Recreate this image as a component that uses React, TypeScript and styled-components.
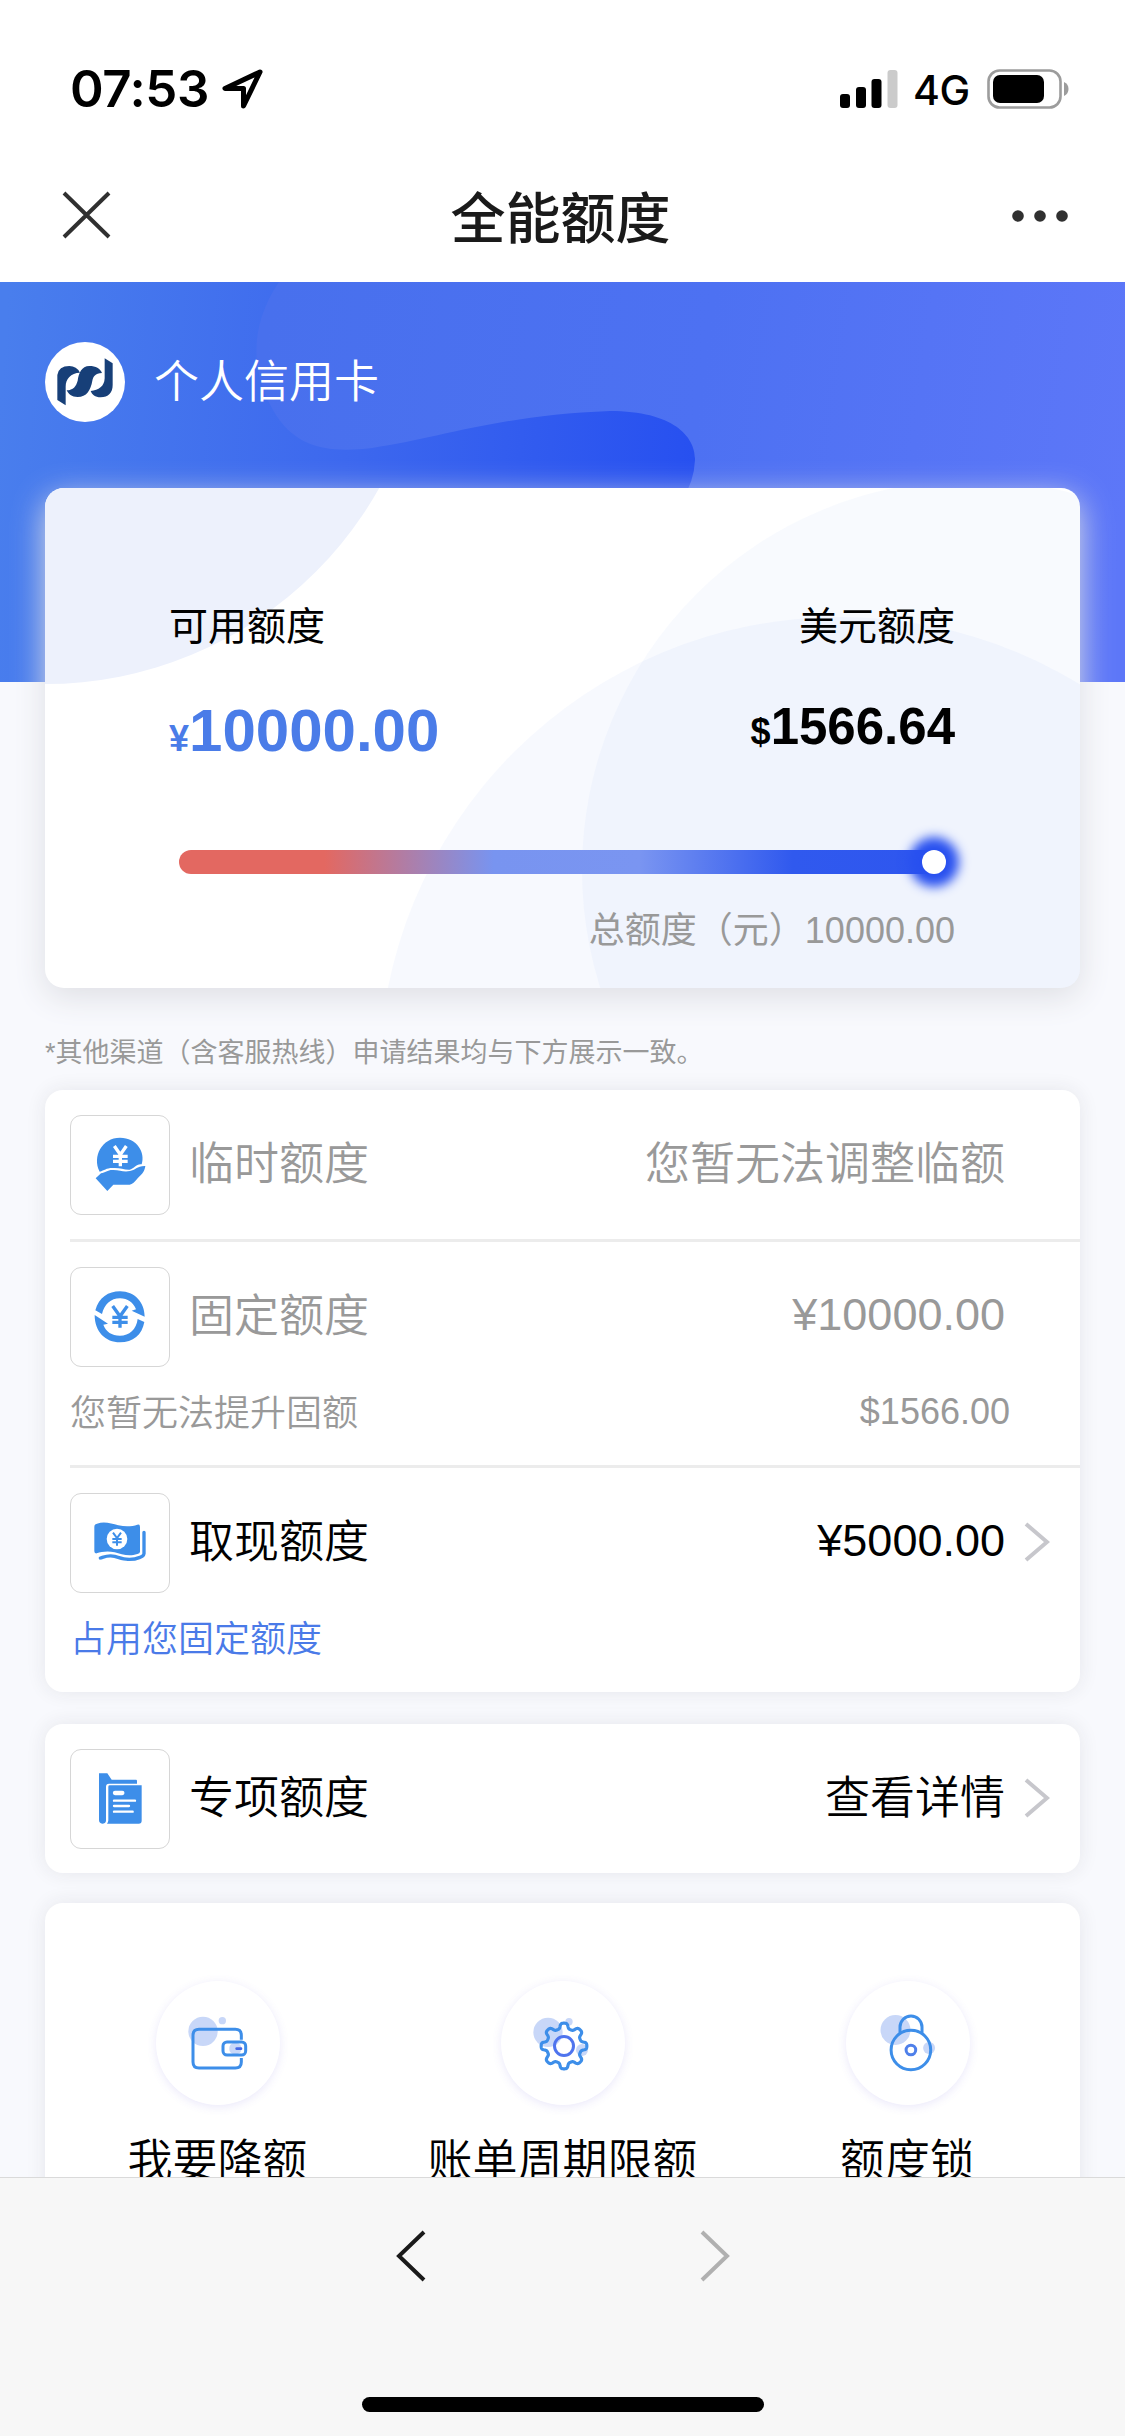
import React from "react";
import styled, { createGlobalStyle } from "styled-components";

const Global = createGlobalStyle`
  * { box-sizing: border-box; }
  html, body { margin: 0; padding: 0; background: #f8f9fd; }
  body { font-family: "Liberation Sans", "Noto Sans CJK SC", sans-serif; color: #000; }
  svg { display: block; flex: none; }
`;

const Screen = styled.div`
  width: 1125px;
  height: 2436px;
  overflow: hidden;
  display: flex;
  flex-direction: column;
`;

const StatusBar = styled.div`
  flex: none;
  height: 150px;
  padding: 58px 56px 0 70px;
  background: #fff;
  display: flex;
  justify-content: space-between;
  font-family: Inter, "Liberation Sans", sans-serif;
`;

const StatusGroup = styled.div<{ $gap: number }>`
  display: flex;
  align-items: center;
  height: 62px;
  gap: ${(p) => p.$gap}px;
`;

const Clock = styled.span`
  width: 139px;
  font-size: 51px;
  line-height: 62px;
  font-weight: 600;
  letter-spacing: -0.4px;
  white-space: nowrap;
`;

const Network = styled.span`
  width: 59px;
  font-size: 41px;
  line-height: 62px;
  font-weight: 500;
  letter-spacing: -0.5px;
  padding-top: 2px;
`;

const NavBar = styled.div`
  flex: none;
  height: 132px;
  padding: 0 57px 0 62px;
  background: #fff;
  display: grid;
  grid-template-columns: 50px 1fr 50px;
  align-items: center;
`;

const NavTitle = styled.h1`
  margin: 0;
  padding: 0 9px 5px 0;
  text-align: center;
  font-size: 55px;
  line-height: 64px;
  font-weight: 500;
  color: #1a1a1a;
  font-family: "Noto Sans CJK SC", sans-serif;
`;

const NavIcon = styled.div<{ $end?: boolean }>`
  display: flex;
  justify-content: ${(p) => (p.$end ? "flex-end" : "flex-start")};
  padding-bottom: ${(p) => (p.$end ? 0 : 2)}px;
`;

const Content = styled.main`
  flex: none;
  height: 1895px;
  overflow: hidden;
`;

const Hero = styled.section`
  position: relative;
  height: 400px;
  padding: 60px 45px 0;
`;

const HeroArt = styled.svg`
  position: absolute;
  inset: 0;
`;

const Brand = styled.div`
  position: relative;
  display: flex;
  align-items: center;
  gap: 29px;
  height: 80px;
  color: #fff;
`;

const BrandName = styled.span`
  padding-top: 2px;
  font-size: 45px;
  line-height: 60px;
  font-weight: 350;
`;

const Logo = styled.div`
  width: 80px;
  height: 80px;
  border-radius: 50%;
  background: #fff;
`;

const LimitCard = styled.section`
  position: relative;
  margin: -194px 45px 0;
  height: 500px;
  padding: 113px 125px 0 124px;
  border-radius: 19px;
  background: #fff;
  box-shadow: 0 9px 32px rgb(222, 223, 228);
`;

const CardArt = styled.svg`
  position: absolute;
  inset: 0;
  border-radius: 19px;
`;

const Limits = styled.div`
  position: relative;
  display: flex;
  justify-content: space-between;
`;

const Limit = styled.div<{ $right?: boolean }>`
  display: flex;
  flex-direction: column;
  align-items: ${(p) => (p.$right ? "flex-end" : "flex-start")};
`;

const LimitLabel = styled.span`
  font-size: 39px;
  line-height: 52px;
`;

const Amount = styled.span<{ $size: number; $color: string }>`
  margin-top: 42px;
  font-weight: 700;
  font-size: ${(p) => p.$size}px;
  line-height: ${(p) => (p.$size > 55 ? 72 : 64)}px;
  color: ${(p) => p.$color};
  white-space: nowrap;
`;

const Currency = styled.small`
  font-size: 36px;
`;

const Slider = styled.div`
  position: relative;
  margin: 75px 9px 0 10px;
  height: 24px;
  border-radius: 12px;
  display: flex;
  justify-content: flex-end;
  background: linear-gradient(90deg, #e36861 19%, #7894f0 41%, #7a95f1 60%, #3059ee 80%, #2e56ef);
`;

const Knob = styled.i`
  width: 24px;
  height: 24px;
  border-radius: 50%;
  background: #fff;
  box-shadow: 0 0 11px 13px #2850ef;
`;

const Total = styled.div`
  position: relative;
  margin-top: 33px;
  text-align: right;
  font-size: 36px;
  line-height: 48px;
  color: #999;
`;

const Note = styled.p`
  margin: 0;
  padding: 45px 45px 0;
  height: 102px;
  font-size: 27px;
  line-height: 40px;
  color: #999;
`;

const Panel = styled.section<{ $height: number; $gap?: number }>`
  margin: 0 45px ${(p) => p.$gap ?? 0}px;
  height: ${(p) => p.$height}px;
  border-radius: 18px;
  background: #fff;
  box-shadow: 0 0 20px rgba(40, 40, 60, 0.09);
`;

const Item = styled.div<{ $height: number; $line?: boolean }>`
  margin-left: 25px;
  height: ${(p) => p.$height}px;
  padding-top: 25px;
  border-bottom: ${(p) => (p.$line ? "3px solid #ececec" : "none")};
`;

const ItemRow = styled.div<{ $muted?: boolean }>`
  display: flex;
  align-items: center;
  height: 100px;
  padding-right: 28px;
  font-size: 45px;
  line-height: 60px;
  font-weight: 350;
  color: ${(p) => (p.$muted ? "#999" : "#000")};
`;

const IconBox = styled.div`
  width: 100px;
  height: 100px;
  margin-right: 19px;
  border: 1px solid #d6d6d6;
  border-radius: 11px;
`;

const Value = styled.span<{ $numeric?: boolean }>`
  margin-left: auto;
  padding-bottom: ${(p) => (p.$numeric ? 4 : 0)}px;
`;

const ArrowSlot = styled.span`
  width: 47px;
  display: flex;
  justify-content: flex-end;
  padding: 0 2px 2px 0;
`;

const ItemNote = styled.div<{ $link?: boolean }>`
  display: flex;
  justify-content: space-between;
  padding-right: 70px;
  margin-top: 23px;
  font-size: 36px;
  line-height: 48px;
  font-weight: 350;
  color: ${(p) => (p.$link ? "#4a7ae8" : "#999")};
`;

const NoteValue = styled.span`
  margin-top: -2px;
`;

const Actions = styled.div`
  display: grid;
  grid-template-columns: repeat(3, 1fr);
  padding-top: 78px;
`;

const Action = styled.div`
  display: flex;
  flex-direction: column;
  align-items: center;
  gap: 27px;
  font-size: 45px;
  line-height: 60px;
  font-weight: 350;
  white-space: nowrap;
`;

const RoundIcon = styled.div`
  width: 124px;
  height: 124px;
  border-radius: 50%;
  background: #fff;
  box-shadow: 0 2px 10px rgba(90, 80, 220, 0.13);
`;

const BottomBar = styled.footer`
  flex: none;
  height: 259px;
  padding-top: 52px;
  border-top: 1px solid #dadada;
  background: #f7f7f7;
  display: flex;
  flex-direction: column;
  align-items: center;
`;

const Pager = styled.div`
  display: flex;
  gap: 274px;
  height: 52px;
`;

const HomeIndicator = styled.div`
  margin-top: 115px;
  width: 402px;
  height: 15px;
  border-radius: 8px;
  background: #000;
`;

const BLUE = "#3d8ee9";

const Chevron = ({ back, color, w, h, sw }: { back?: boolean; color: string; w: number; h: number; sw: number }) => (
  <svg width={w} height={h} fill="none" stroke={color} strokeWidth={sw}>
    <path d={back ? `M${w - 2} 2L3 ${h / 2}L${w - 2} ${h - 2}` : `M2 2L${w - 3} ${h / 2}L2 ${h - 2}`} />
  </svg>
);

const HandCoinIcon = () => (
  <svg width="98" height="98" viewBox="33 48 294 294" fill={BLUE}>
    <path d="M119 215C96 169 126 113 180 113C231 113 257 158 245 193C230 190 221 207 209 209C192 210 181 203 161 204C139 203 134 211 119 215Z" />
    <path d="M107 235L123 220C137 218 142 209 160 210C181 210 190 217 210 213C225 211 232 197 256 198C254 216 243 225 233 235C224 246 217 254 209 254H160L142 273Z" />
    <path d="M163 138L181 164L199 138M181 164V199M159 169H203M159 184H203" fill="none" stroke="#fff" strokeWidth="10" />
  </svg>
);

const CycleIcon = () => (
  <svg width="98" height="98" viewBox="33 503 294 294" fill={BLUE}>
    <path d="M106 630C117 591 145 573 180 573C225 573 254 607 254 649L215 631L228 627C220 607 203 594 180 594C152 594 133 612 126 641Z" />
    <path d="M104 644L144 670L130 673C138 694 155 706 180 706C208 706 229 688 233 656L253 665C246 704 219 726 180 726C136 726 104 694 104 644Z" />
    <path d="M158 617L180 648L202 617M180 646V682M157 651H203M157 666H203" fill="none" stroke={BLUE} strokeWidth="10" />
  </svg>
);

const CashIcon = () => (
  <svg width="98" height="98" viewBox="33 42 294 294" fill={BLUE}>
    <path d="M103 140Q103 132 111 131C132 123 154 130 175 136C198 141 218 139 232 134Q240 132 240 141V215Q240 221 232 222C206 231 184 222 164 217C143 212 125 215 110 220Q103 221 103 214Z" />
    <path d="M252 157V221Q251 229 240 232C210 244 185 236 164 229C145 224 134 230 121 234" fill="none" stroke={BLUE} strokeWidth="10" strokeLinecap="round" />
    <circle cx="171" cy="177" r="31" fill="#fff" />
    <path d="M159 158L171 174L183 158M171 173V197M157 177H185M157 187H185" fill="none" stroke={BLUE} strokeWidth="6" />
  </svg>
);

const FolderIcon = () => (
  <svg width="98" height="98" viewBox="33 810 294 294" fill={BLUE}>
    <path d="M117 880H142L155 899H228Q231 899 231 903V911H147Q138 911 138 920V1023Q136 1031 127 1031Q117 1030 117 1020Z" />
    <path d="M149 916H245V1022Q245 1031 236 1031H141Q145 1027 145 1021V920Q145 916 149 916Z" />
    <path d="M165 939H187" stroke="#fff" strokeWidth="13" strokeLinecap="round" />
    <path d="M162 962H225M162 978H207M162 995H218" stroke="#fff" strokeWidth="7" strokeLinecap="round" />
  </svg>
);

const WalletIcon = () => (
  <svg width="124" height="124" viewBox="18 18 372 372" fill="none">
    <circle cx="159" cy="169" r="44" fill="#c8d7f8" />
    <circle cx="217" cy="137" r="11" fill="#c8d7f8" />
    <path d="M274 194V181Q274 163 256 163H147Q129 163 129 181V261Q129 279 147 279H256Q274 279 274 261V249" stroke={BLUE} strokeWidth="9" />
    <rect x="238" y="204" width="36" height="34" rx="15" fill="#c8d7f8" />
    <rect x="219" y="201" width="68" height="39" rx="12" stroke={BLUE} strokeWidth="9" />
    <path d="M260 221H273" stroke="#4467e6" strokeWidth="8" strokeLinecap="round" />
  </svg>
);

// Eight rounded teeth, sampled around the hub.
const gearPath =
  Array.from({ length: 240 }, (_, i) => {
    const t = (i / 240) * Math.PI * 2;
    const r = 60.5 + (8 * Math.tanh(2 * Math.cos(8 * t))) / Math.tanh(2);
    return `${i ? "L" : "M"}${(207 + r * Math.sin(t)).toFixed(2)} ${(213 - r * Math.cos(t)).toFixed(2)}`;
  }).join("") + "Z";

const GearIcon = () => (
  <svg width="124" height="124" viewBox="18 18 372 372" fill="none">
    <circle cx="159" cy="172" r="44" fill="#c8d7f8" />
    <circle cx="222" cy="140" r="11" fill="#c8d7f8" />
    <circle cx="261" cy="225" r="18" fill="#c8d7f8" />
    <path d={gearPath} stroke={BLUE} strokeWidth="9.5" strokeLinejoin="round" />
    <circle cx="207" cy="213" r="28.5" stroke="#4f74ee" strokeWidth="9" />
  </svg>
);

const LockIcon = () => (
  <svg width="124" height="124" viewBox="845.5 1981 124 124" fill="none">
    <circle cx="895" cy="2030" r="15" fill="#c8d7f8" />
    <circle cx="928.6" cy="2048" r="6" fill="#c8d7f8" />
    <path d="M899.5 2033V2027A11 11 0 0 1 921.5 2027V2033" stroke={BLUE} strokeWidth="3" />
    <circle cx="910.4" cy="2050" r="19.8" stroke={BLUE} strokeWidth="3" />
    <circle cx="910.4" cy="2050" r="4.8" stroke="#4f80ea" strokeWidth="3" />
  </svg>
);

export default function App() {
  return (
    <Screen>
      <Global />
      <StatusBar>
        <StatusGroup $gap={13}>
          <Clock>07:53</Clock>
          <svg width="42" height="42" viewBox="0 0 42 42" fill="none" stroke="#000" strokeWidth="5" strokeLinejoin="round">
            <path d="M38 4L3 20.5H21.5V38Z" />
          </svg>
        </StatusGroup>
        <StatusGroup $gap={15}>
          <svg width="59" height="38" viewBox="0 0 59 38">
            <rect x="1" y="24" width="10" height="14" rx="3" />
            <rect x="17" y="17" width="10" height="21" rx="3" />
            <rect x="32.5" y="9" width="10" height="29" rx="3" />
            <rect x="48.5" y="0" width="10" height="38" rx="3" fill="#cbcbcb" />
          </svg>
          <Network>4G</Network>
          <svg width="82" height="40" viewBox="0 0 82 40">
            <rect x="1.5" y="1.5" width="72" height="37" rx="11" fill="none" stroke="#9c9c9c" strokeWidth="2.6" />
            <rect x="6" y="6" width="51" height="28" rx="7" />
            <path d="M77 13Q81.5 15 81.5 20T77 27Z" fill="#9c9c9c" />
          </svg>
        </StatusGroup>
      </StatusBar>
      <NavBar>
        <NavIcon>
          <svg width="50" height="48" viewBox="0 0 50 48" stroke="#303030" strokeWidth="4">
            <path d="M2 2L47 46M47 2L2 46" />
          </svg>
        </NavIcon>
        <NavTitle>全能额度</NavTitle>
        <NavIcon $end>
          <svg width="56" height="12" fill="#303030">
            <circle cx="6" cy="6" r="5.8" />
            <circle cx="28" cy="6" r="5.8" />
            <circle cx="50" cy="6" r="5.8" />
          </svg>
        </NavIcon>
      </NavBar>

      <Content>
        <Hero>
          <HeroArt width="1125" height="400" viewBox="0 282 1125 400">
            <defs>
              <linearGradient id="deep" gradientUnits="userSpaceOnUse" x1="0" y1="400" x2="695" y2="450">
                <stop offset="0" stopColor="#497eed" />
                <stop offset="0.5" stopColor="#3d68ee" />
                <stop offset="1" stopColor="#2750f0" />
              </linearGradient>
              <linearGradient id="soft" gradientUnits="userSpaceOnUse" x1="256" y1="400" x2="1125" y2="520">
                <stop offset="0" stopColor="#4870ed" />
                <stop offset="0.5" stopColor="#4d71f2" />
                <stop offset="1" stopColor="#5d77f8" />
              </linearGradient>
            </defs>
            <rect y="282" width="1125" height="400" fill="url(#deep)" />
            <path d="M279 282C250 325 250 369 273 410C295 449 330 453 372 448C440 438 500 415 610 411C675 411 696 438 695 460Q694 482 682 500V682H1125V282Z" fill="url(#soft)" />
          </HeroArt>
          <Brand>
            <Logo>
              <svg width="80" height="80" viewBox="45 66 240 240" fill="#173f78">
                <path d="M82 165Q86 138 118 138Q140 138 150 158C122 159 107 176 107 200V256L82 240Z" />
                <path d="M178 138C198 138 210 145 216 159C195 160 190 170 187 182C182 210 170 231 143 231C125 231 115 222 110 211C130 210 138 200 143 182C146 160 155 138 178 138Z" />
                <path d="M224 115L248 130V195C248 218 235 232 212 232C195 232 186 224 182 213C206 210 223 200 224 175Z" />
              </svg>
            </Logo>
            <BrandName>个人信用卡</BrandName>
          </Brand>
        </Hero>

        <LimitCard>
          <CardArt width="1035" height="500" viewBox="45 488 1035 500">
            <circle cx="45" cy="301" r="383" fill="#edf1fc" />
            <circle cx="840" cy="1078" r="461" fill="#5a8ff0" fillOpacity="0.05" />
            <circle cx="972" cy="870" r="390" fill="#5a96ec" fillOpacity="0.045" />
          </CardArt>
          <Limits>
            <Limit>
              <LimitLabel>可用额度</LimitLabel>
              <Amount $size={60} $color="#4a7ce8">
                <Currency>¥</Currency>10000.00
              </Amount>
            </Limit>
            <Limit $right>
              <LimitLabel>美元额度</LimitLabel>
              <Amount $size={51} $color="#000">
                <Currency>$</Currency>1566.64
              </Amount>
            </Limit>
          </Limits>
          <Slider>
            <Knob />
          </Slider>
          <Total>总额度（元）10000.00</Total>
        </LimitCard>

        <Note>*其他渠道（含客服热线）申请结果均与下方展示一致。</Note>

        <Panel $height={602} $gap={32}>
          <Item $height={152} $line>
            <ItemRow $muted>
              <IconBox><HandCoinIcon /></IconBox>
              临时额度
              <Value>您暂无法调整临额</Value>
              <ArrowSlot />
            </ItemRow>
          </Item>
          <Item $height={226} $line>
            <ItemRow $muted>
              <IconBox><CycleIcon /></IconBox>
              固定额度
              <Value $numeric>¥10000.00</Value>
              <ArrowSlot />
            </ItemRow>
            <ItemNote>
              <span>您暂无法提升固额</span>
              <NoteValue>$1566.00</NoteValue>
            </ItemNote>
          </Item>
          <Item $height={224}>
            <ItemRow>
              <IconBox><CashIcon /></IconBox>
              取现额度
              <Value $numeric>¥5000.00</Value>
              <ArrowSlot><Chevron color="#c7c7cc" w={26} h={40} sw={4} /></ArrowSlot>
            </ItemRow>
            <ItemNote $link>占用您固定额度</ItemNote>
          </Item>
        </Panel>

        <Panel $height={149} $gap={30}>
          <Item $height={149}>
            <ItemRow>
              <IconBox><FolderIcon /></IconBox>
              专项额度
              <Value>查看详情</Value>
              <ArrowSlot><Chevron color="#c7c7cc" w={26} h={40} sw={4} /></ArrowSlot>
            </ItemRow>
          </Item>
        </Panel>

        <Panel $height={330}>
          <Actions>
            <Action>
              <RoundIcon><WalletIcon /></RoundIcon>
              我要降额
            </Action>
            <Action>
              <RoundIcon><GearIcon /></RoundIcon>
              账单周期限额
            </Action>
            <Action>
              <RoundIcon><LockIcon /></RoundIcon>
              额度锁
            </Action>
          </Actions>
        </Panel>
      </Content>

      <BottomBar>
        <Pager>
          <Chevron back color="#1a1a1a" w={30} h={52} sw={4} />
          <Chevron color="#b0b0b0" w={30} h={52} sw={4} />
        </Pager>
        <HomeIndicator />
      </BottomBar>
    </Screen>
  );
}
